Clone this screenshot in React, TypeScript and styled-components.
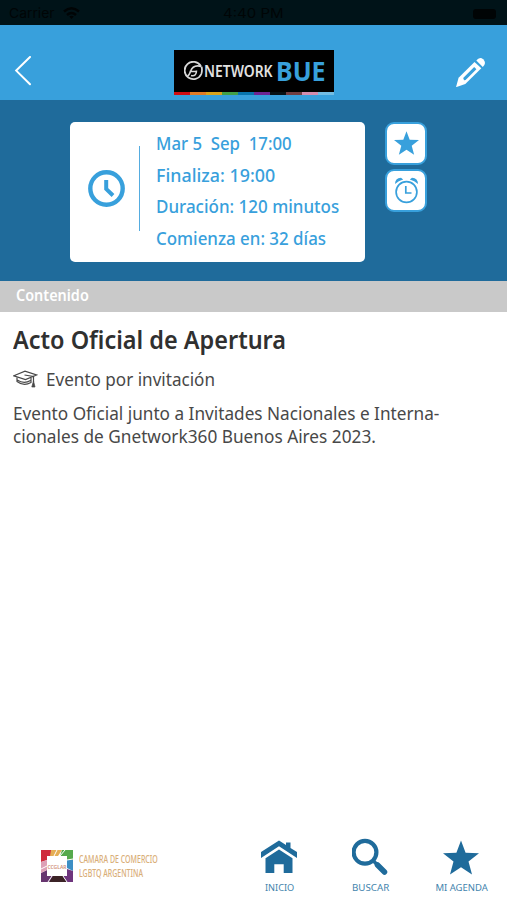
import React, { useLayoutEffect, useRef, useState } from "react";
import styled, { createGlobalStyle } from "styled-components";

const BLUE = "#38a0dc";
const DEEP = "#1f6b9b";

const GlobalStyle = createGlobalStyle`
  * { box-sizing: border-box; }
  body { margin: 0; background: #fff; font-family: "Noto Sans", sans-serif; }
  svg { display: block; flex: none; }
`;

const Line = styled.span`
  display: inline-block;
  white-space: pre;
  transform-origin: left center;
`;

const LineBox = styled.div<{ $w: number }>`
  width: ${(p) => p.$w}px;
  white-space: nowrap;
  flex: none;
`;

/* Condenses a line of text so that it takes exactly the given width. */
function Fit({ width, children }: { width: number; children: string }) {
  const ref = useRef<HTMLSpanElement>(null);
  const [scale, setScale] = useState(1);
  useLayoutEffect(() => {
    if (ref.current) setScale(width / ref.current.offsetWidth);
  }, [width, children]);
  return (
    <LineBox $w={width}>
      <Line ref={ref} style={{ transform: `scaleX(${scale})` }}>{children}</Line>
    </LineBox>
  );
}

const Screen = styled.div`
  width: 507px;
  height: 900px;
  display: flex;
  flex-direction: column;
  background: #fff;
  overflow: hidden;
`;

const StatusBar = styled.div`
  height: 25px;
  flex: none;
  background: #001318;
  color: #000506;
  font: 13px/27px Inter, sans-serif;
  display: grid;
  grid-template-columns: 1fr auto 1fr;
  padding: 0 11px 0 9px;
`;

const Carrier = styled.div`
  display: flex;
  align-items: center;
  gap: 8px;
`;

const Battery = styled.div`
  width: 23px;
  height: 10px;
  border-radius: 3px;
  background: #000405;
  justify-self: end;
  align-self: center;
`;

const Header = styled.header`
  height: 75px;
  flex: none;
  background: ${BLUE};
  display: flex;
  justify-content: space-between;
  padding: 25px 20px 0 14px;
`;

const IconButton = styled.button<{ $w: number }>`
  border: 0;
  padding: 0;
  background: none;
  height: 42px;
  width: ${(p) => p.$w}px;
  display: flex;
  align-items: center;
`;

const Logo = styled.div`
  width: 160px;
  height: 45px;
  background: #000;
  display: flex;
  flex-direction: column;
  justify-content: space-between;
`;

const LogoWords = styled.div`
  height: 42px;
  display: flex;
  align-items: center;
  padding: 0 0 0 10px;
`;

const Network = styled.div`
  color: #e2e2e2;
  font-size: 16.5px;
  line-height: 42px;
  font-weight: 600;
  margin-left: 1px;
`;

const Bue = styled.div`
  color: ${BLUE};
  font: 700 26px/42px "Noto Sans", sans-serif;
  margin-left: 3px;
`;

const Rainbow = styled.div`
  height: 3px;
  display: grid;
  grid-template-columns: repeat(10, 1fr);
`;

const Stripe = styled.i<{ $c: string }>`
  background: ${(p) => p.$c};
`;

const Hero = styled.section`
  height: 181px;
  flex: none;
  background: ${DEEP};
  display: flex;
  align-items: flex-start;
  padding: 22px 0 0 70px;
  gap: 20px;
`;

const TimeCard = styled.div`
  width: 295px;
  height: 140px;
  background: #fff;
  border-radius: 5px;
  display: flex;
  color: ${BLUE};
  padding-left: 18px;
`;

const ClockSlot = styled.div`
  width: 51px;
  padding-top: 48px;
`;

const Divider = styled.div`
  width: 1px;
  height: 85px;
  margin-top: 24px;
  background: #55ace0;
`;

const Times = styled.div`
  padding: 6px 0 0 16px;
  font-size: 18px;
  font-weight: 500;
  line-height: 31.7px;
`;

const Actions = styled.div`
  display: flex;
  flex-direction: column;
  gap: 4px;
`;

const Action = styled.button`
  width: 42px;
  height: 43px;
  padding: 0 0 1px;
  border: 2px solid ${BLUE};
  border-radius: 9px;
  background: #fff;
  display: flex;
  align-items: center;
  justify-content: center;
`;

const SectionBar = styled.div`
  height: 31px;
  flex: none;
  background: #c9c9c9;
  color: #fff;
  font-size: 16px;
  font-weight: 600;
  line-height: 28px;
  padding-left: 15.5px;
`;

const Content = styled.main`
  flex: 1;
  padding: 9px 0 0 13px;
  color: #484848;
  font-size: 18px;
`;

const Title = styled.h1`
  margin: 0;
  font-size: 25px;
  line-height: 36px;
  font-weight: 600;
  color: #303030;
`;

const Category = styled.div`
  display: flex;
  align-items: center;
  gap: 8px;
  margin-top: 10px;
  height: 24px;
  line-height: 24px;
`;

const Description = styled.div`
  margin-top: 11px;
  line-height: 23px;
`;

const Footer = styled.footer`
  height: 68px;
  flex: none;
  display: flex;
  justify-content: space-between;
`;

const Sponsor = styled.div`
  display: flex;
  gap: 5px;
  padding: 17px 0 0 40px;
`;

const SponsorName = styled.div`
  color: #d9ae78;
  font-size: 11px;
  font-weight: 500;
  line-height: 14px;
  padding-top: 3px;
`;

const Nav = styled.nav`
  width: 273.5px;
  display: grid;
  grid-template-columns: repeat(3, 1fr);
`;

const NavItem = styled.a`
  display: flex;
  flex-direction: column;
  align-items: center;
  padding-top: 6px;
  color: #4384ad;
  font-size: 9.5px;
  line-height: 16px;
  gap: 4px;
`;

const STAR = "M18 0 L22.6 12.2 L36 12.8 L25.5 21 L29 34 L18 26.7 L7 34 L10.5 21 L0 12.8 L13.4 12.2Z";
const STRIPES = ["#cf0d12", "#df7b25", "#d8a31b", "#42a046", "#0874ad", "#6c2593", "#071014", "#713e42", "#d38daf", "#72bce3"];

export default function App() {
  return (
    <Screen>
      <GlobalStyle />
      <StatusBar>
        <Carrier>
          <Fit width={46}>Carrier</Fit>
          <svg width="17" height="13" viewBox="0 0 17 13" fill="none" stroke="#000405" strokeWidth="2.4">
            <path d="M1 4.5Q8.5-2 16 4.5M4 8Q8.5 4 13 8" />
            <path d="M6.2 9.6Q8.5 7.8 10.8 9.6L8.5 12Z" fill="#000405" stroke="none" />
          </svg>
        </Carrier>
        <Fit width={60}>4:40 PM</Fit>
        <Battery />
      </StatusBar>
      <Header>
        <IconButton $w={38} aria-label="Volver">
          <svg width="20" height="30" viewBox="0 0 20 30" fill="none" stroke="#fff" strokeWidth="2" strokeLinecap="round">
            <path d="M16 1L2.2 14.6L16 28.2" />
          </svg>
        </IconButton>
        <Logo>
          <LogoWords>
            <svg width="19" height="20" viewBox="0 0 19 20" fill="none" stroke="#d8d8d8" strokeWidth="1.8">
              <path d="M16.8 5A8.7 8.7 0 1 0 17.3 13Q18.5 9.5 17.6 5.8" />
              <path d="M17.5 5.5C12 4 8 6 6.5 10.5Q5 14.5 3.5 15M5.5 10.5H12M7 14.5C11 15.5 12.5 13 12.5 9.5" strokeWidth="1.6" />
            </svg>
            <Network><Fit width={69}>NETWORK</Fit></Network>
            <Bue><Fit width={50}>BUE</Fit></Bue>
          </LogoWords>
          <Rainbow>{STRIPES.map((c) => <Stripe key={c} $c={c} />)}</Rainbow>
        </Logo>
        <IconButton $w={32} aria-label="Editar">
          <svg width="32" height="32" viewBox="0 0 32 32">
            <path d="M1 32.2L3.6 22.8L19.5 7L26.3 13.2L10.3 29Z" fill="#fff" />
            <path d="M21.3 5.6Q24.5 1.2 28.2 4.2Q32 8 27.8 12Z" fill="#fff" />
            <path d="M8.2 23L19.2 12L21.4 14.2L10.6 25L9 25.2Z" fill={BLUE} />
          </svg>
        </IconButton>
      </Header>
      <Hero>
        <TimeCard>
          <ClockSlot>
            <svg width="37" height="37" viewBox="0 0 37 37" fill="none" stroke={BLUE}>
              <circle cx="18.5" cy="18.5" r="16.2" strokeWidth="4.4" />
              <path d="M18.2 10V19L25 25.5" strokeWidth="4" />
            </svg>
          </ClockSlot>
          <Divider />
          <Times>
            <Fit width={136}>Mar 5  Sep  17:00</Fit>
            <Fit width={119}>Finaliza: 19:00</Fit>
            <Fit width={183}>Duración: 120 minutos</Fit>
            <Fit width={170}>Comienza en: 32 días</Fit>
          </Times>
        </TimeCard>
        <Actions>
          <Action aria-label="Favorito">
            <svg width="25" height="24" viewBox="0 0 36 34"><path d={STAR} fill={BLUE} /></svg>
          </Action>
          <Action aria-label="Alarma">
            <svg width="25" height="27" viewBox="0 0 25 27" fill="none" stroke={BLUE} strokeWidth="1.7">
              <circle cx="12.5" cy="15" r="10.4" />
              <path d="M11.8 9V16H17.5" />
              <path d="M1 7Q1 1.2 7 .7L9.2 2.5Q4.5 3.8 1 7ZM24 7Q24 1.2 18 .7L15.8 2.5Q20.5 3.8 24 7Z" fill={BLUE} stroke="none" />
            </svg>
          </Action>
        </Actions>
      </Hero>
      <SectionBar><Fit width={73}>Contenido</Fit></SectionBar>
      <Content>
        <Title><Fit width={273}>Acto Oficial de Apertura</Fit></Title>
        <Category>
          <svg width="25" height="18" viewBox="0 0 25 18" fill="none" stroke="#484848" strokeWidth="1.2">
            <path d="M.8 5.8L12 1.2L23.5 5L12.5 9.6Z" />
            <path d="M4 7.5V11.5Q10.5 16.5 18 12.5V8M4.2 10Q11 14.5 17.5 10.5M11.5 5L20.5 6.5V12" />
            <path d="M20.5 11L22 17H18.8Z" fill="#484848" strokeWidth=".7" />
          </svg>
          <Fit width={169}>Evento por invitación</Fit>
        </Category>
        <Description>
          <Fit width={426}>Evento Oficial junto a Invitades Nacionales e Interna-</Fit>
          <Fit width={363}>cionales de Gnetwork360 Buenos Aires 2023.</Fit>
        </Description>
      </Content>
      <Footer>
        <Sponsor>
          <svg width="34" height="34" viewBox="0 0 34 34">
            <path d="M1 1H11V7H7V11L1 13Z" fill="#cf293b" />
            <path d="M11 1H22L18 7H10Z" fill="#e5ae55" />
            <path d="M22 1H33V11H27V7H20Z" fill="#55a94c" />
            <path d="M27 11H33V22L27 19Z" fill="#3d8fc4" />
            <path d="M27 20L33 22V33H26L23 27H27Z" fill="#6e357d" />
            <path d="M12 27H23L27 33H9Z" fill="#3b2326" />
            <path d="M1 24L7 21V27H13L9 33H1Z" fill="#67356f" />
            <path d="M1 13L7 11V21L1 24Z" fill="#dda0b6" />
            <path d="M14 7L17 1M7 17L1 20M20 7L25 1M27 11L33 10M23 27L27 33M12 27L8 33" stroke="#fff" strokeWidth="1" />
            <text x="17" y="19.5" textAnchor="middle" fontFamily="Noto Sans" fontWeight="600" fontSize="5" fill="#cf9078">CCGLAR</text>
          </svg>
          <SponsorName>
            <Fit width={79}>CAMARA DE COMERCIO</Fit>
            <Fit width={64}>LGBTQ ARGENTINA</Fit>
          </SponsorName>
        </Sponsor>
        <Nav>
          <NavItem>
            <svg width="36" height="38" viewBox="0 0 36 38" fill={DEEP}>
              <path d="M0 17V14L18 2.5L25 7V4.5H29.5V10L36 14V20L18 8.3L0 20Z" />
              <path d="M4.5 20.2L18 11.5L31.5 20.2V35H22.7V26.3H13.3V35H4.5Z" />
            </svg>
            <Fit width={29}>INICIO</Fit>
          </NavItem>
          <NavItem>
            <svg width="36" height="38" viewBox="0 0 36 38" fill="none" stroke={DEEP}>
              <circle cx="13" cy="14.3" r="11.4" strokeWidth="4.2" />
              <path d="M21 22.5L25 26.5" strokeWidth="3.5" />
              <path d="M25.5 27L32.5 34" strokeWidth="5.5" strokeLinecap="round" />
            </svg>
            <Fit width={37}>BUSCAR</Fit>
          </NavItem>
          <NavItem>
            <svg width="36" height="38" viewBox="0 -2.5 36 38"><path d={STAR} fill={DEEP} /></svg>
            <Fit width={52}>MI AGENDA</Fit>
          </NavItem>
        </Nav>
      </Footer>
    </Screen>
  );
}
